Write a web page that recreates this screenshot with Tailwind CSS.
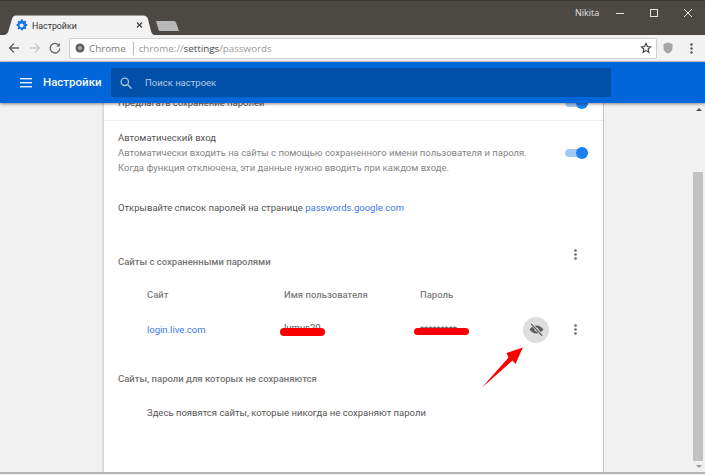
<!DOCTYPE html>
<html lang="ru">
<head>
  <meta charset="UTF-8" />
  <title>Настройки</title>
  <script src="https://cdn.jsdelivr.net/npm/@tailwindcss/browser@4"></script>
</head>
<body class="relative w-[705px] h-[475px] overflow-hidden bg-[#f1f1f1] font-['Roboto',sans-serif] text-[9.5px] leading-[15px] text-[#555]">

  <!-- Title bar -->
  <div class="relative flex h-[35px] bg-[#4c4844] border-t border-[#3a3734]">
    <svg class="absolute left-0 top-[-1px]" width="185" height="36" viewBox="0 0 185 36">
      <path d="M2 35.500 C7 35 8 33 9 29 L12 19 C13 16 14 15.500 16 15.500 L143 15.500 C146 15.500 147 17 148 19 L151 31 C152 34 153 35 156 35.500 Z" fill="#f2f2f2"/>
      <path d="M156 21 H174 Q175.500 21 176 22.500 L179 31 H160 Q159 31 158.500 29.500 Z" fill="#b9b9b9"/>
      <path d="M22 16.800l1.100.3.300 1.200 1.100.4 1-.6 1.300 1.300-.6 1 .4 1.100 1.200.3v1.800l-1.200.3-.4 1.100.6 1-1.300 1.300-1-.6-1.100.4-.3 1.200h-1.800l-.3-1.200-1.100-.4-1 .6-1.300-1.300.6-1-.4-1.100-1.200-.3v-1.800l1.200-.3.4-1.100-.6-1 1.300-1.300 1 .6 1.100-.4.300-1.200z" transform="translate(0.600 3.200) scale(0.96)" fill="#1a73e8"/>
      <circle cx="21.600" cy="25.500" r="2" fill="#f2f2f2"/>
      <path d="M137 22.500l5 5m0-5l-5 5" stroke="#444" stroke-width="1.300" fill="none"/>
    </svg>
    <span class="absolute left-[32px] top-[18px] text-[8.8px] text-[#333]">Настройки</span>
    <span class="ml-[575px] mt-[4px] text-[9px] font-['Open_Sans',sans-serif] text-[#e4e2e0]">Nikita</span>
    <svg class="absolute left-[612px] top-[3px]" width="86" height="18" viewBox="0 0 86 18" fill="none" stroke="#e6e6e6" stroke-width="1">
      <path d="M4 9.500h8"/>
      <rect x="38.500" y="5.500" width="7" height="7"/>
      <path d="M72 5l8 8m0-8l-8 8"/>
    </svg>
  </div>

  <!-- Toolbar -->
  <div class="flex h-[27px] items-center bg-[#f2f2f2] border-b border-[#c9c9c9]">
    <svg class="ml-[8px] shrink-0" width="12" height="12" viewBox="0 0 12 12" fill="none" stroke="#5f6368" stroke-width="1.300"><path d="M11 6H1.500M6 1.500L1.500 6 6 10.500"/></svg>
    <svg class="ml-[9px] shrink-0" width="12" height="12" viewBox="0 0 12 12" fill="none" stroke="#c8c8c8" stroke-width="1.300"><path d="M1 6h9.500M6 1.500L10.500 6 6 10.500"/></svg>
    <svg class="ml-[8px] shrink-0" width="12" height="12" viewBox="0 0 12 12" fill="none" stroke="#5f6368" stroke-width="1.300"><path d="M10 3.500A4.800 4.800 0 1 0 10.800 6.500"/><path d="M10.800 1v3.600H7.200z" fill="#5f6368" stroke="none"/></svg>
    <div class="ml-[8px] flex h-[21px] w-[588px] shrink-0 items-center rounded-[2px] border border-[#cfcfcf] bg-white font-['Open_Sans',sans-serif] text-[9.800px] text-[#777]">
      <svg class="ml-[5px] shrink-0" width="10" height="10" viewBox="0 0 10 10"><circle cx="5" cy="5" r="4.500" fill="#5f5f5f"/><circle cx="5" cy="5" r="1.800" fill="#bbb"/></svg>
      <span class="ml-[4px]">Chrome</span>
      <span class="ml-[7px] h-[13px] w-px bg-[#bbb]"></span>
      <span class="ml-[5px] text-[#999]">chrome://<span class="text-[#444]">settings</span>/passwords</span>
      <svg class="ml-auto mr-[4px]" width="12" height="12" viewBox="0 0 24 24" fill="none" stroke="#444" stroke-width="2.400"><path d="M12 3l2.700 6 6.300.7-4.700 4.300 1.300 6.500L12 17.200 6.400 20.500 7.700 14 3 9.700 9.300 9z"/></svg>
    </div>
    <svg class="ml-[6px] shrink-0" width="10" height="12" viewBox="0 0 10 12"><path d="M5 .5l4.500 1.500v4c0 3-2 4.800-4.500 5.500C2.500 10.800.5 9 .5 6V2z" fill="#a5a5a5"/></svg>
    <svg class="ml-[17px] shrink-0" width="3" height="11" viewBox="0 0 3 11" fill="#555"><circle cx="1.500" cy="1.500" r="1.200"/><circle cx="1.500" cy="5.500" r="1.200"/><circle cx="1.500" cy="9.500" r="1.200"/></svg>
  </div>

  <!-- Settings header -->
  <header class="relative z-10 flex h-[41px] items-start bg-[#0066d9] shadow-[0_1px_3px_rgba(0,0,0,0.45)]">
    <svg class="ml-[20px] mt-[16px] shrink-0" width="12" height="10" viewBox="0 0 12 10" fill="#e8f0fb"><rect width="12" height="1.400"/><rect y="4" width="12" height="1.400"/><rect y="8" width="12" height="1.400"/></svg>
    <span class="ml-[11px] mt-[13px] w-[68px] shrink-0 text-[11.500px] font-medium text-[#f2f6fc]">Настройки</span>
    <div class="mt-[6px] flex h-[29px] w-[500px] shrink-0 items-center rounded-[1px] bg-[#0050a9]">
      <svg class="ml-[9px] shrink-0" width="12" height="12" viewBox="0 0 12 12" fill="none" stroke="#a9c4e4" stroke-width="1.300"><circle cx="4.800" cy="4.800" r="3.700"/><path d="M7.500 7.500L11.500 11.500"/></svg>
      <span class="ml-[13px] text-[#b5cce8]">Поиск настроек</span>
    </div>
  </header>

  <!-- Page content -->
  <main class="relative flex h-[371px] overflow-hidden">
    <section class="ml-[102px] h-[369px] w-[502px] shrink-0 border-x border-l-2 border-x-[#c4c4c4] border-l-[#dcdcdc] bg-white">
      <div class="-mt-[18px] flex h-[36px] items-center justify-between border-b border-[#ebebeb] pl-[14px] pr-[15px]">
        <span>Предлагать сохранение паролей</span>
        <span class="relative block h-[8px] w-[23px] rounded-full bg-[#a3c8f7]"><span class="absolute right-0 top-[-2px] h-[12px] w-[12px] rounded-full bg-[#1a80f0]"></span></span>
      </div>
      <div class="mt-[9px] flex items-center justify-between pl-[14px] pr-[15px]">
        <div>
          <p>Автоматический вход</p>
          <p class="text-[#858585]">Автоматически входить на сайты с помощью сохраненного имени пользователя и пароля.</p>
          <p class="text-[#858585]">Когда функция отключена, эти данные нужно вводить при каждом входе.</p>
        </div>
        <span class="relative block h-[8px] w-[23px] shrink-0 rounded-full bg-[#a3c8f7]"><span class="absolute right-0 top-[-2px] h-[12px] w-[12px] rounded-full bg-[#1a80f0]"></span></span>
      </div>
      <p class="mt-[25px] pl-[14px]">Открывайте список паролей на странице <span class="text-[#3b78e7]">passwords.google.com</span></p>
      <div class="mt-[34px] flex items-center justify-between pl-[14px] pr-[26px]">
        <span class="font-medium text-[#757575]">Сайты с сохраненными паролями</span>
        <svg class="mb-[14px]" width="3" height="11" viewBox="0 0 3 11" fill="#666"><circle cx="1.500" cy="1.500" r="1.300"/><circle cx="1.500" cy="5.500" r="1.300"/><circle cx="1.500" cy="9.500" r="1.300"/></svg>
      </div>
      <div class="mt-[13px] grid grid-cols-[137px_136px_1fr] pl-[43px] font-medium text-[#808080]">
        <span>Сайт</span>
        <span>Имя пользователя</span>
        <span>Пароль</span>
      </div>
      <div class="mt-[14px] flex h-[27px] items-center pl-[43px] pr-[26px]">
        <span class="w-[137px] text-[#3b78e7]">login.live.com</span>
        <span class="mb-[4px] w-[136px]">lumus20</span>
        <span>*********</span>
        <span class="ml-auto mr-[25px] flex h-[26px] w-[26px] items-center justify-center rounded-full bg-[#dedede]">
          <svg width="15" height="15" viewBox="0 0 24 24" fill="#5f5f5f"><path d="M12 5.500c-5 0-9 3-11 6.500 2 3.500 6 6.500 11 6.500s9-3 11-6.500c-2-3.500-6-6.500-11-6.500z"/><circle cx="12" cy="12" r="3" fill="#dedede"/><path d="M3.500 2.500l17.500 19" stroke="#dedede" stroke-width="4.200"/><path d="M3.500 3l17.500 19" stroke="#5f5f5f" stroke-width="1.800"/></svg>
        </span>
        <svg width="3" height="11" viewBox="0 0 3 11" fill="#666"><circle cx="1.500" cy="1.500" r="1.300"/><circle cx="1.500" cy="5.500" r="1.300"/><circle cx="1.500" cy="9.500" r="1.300"/></svg>
      </div>
      <p class="mt-[28px] pl-[14px] font-medium text-[#757575]">Сайты, пароли для которых не сохраняются</p>
      <p class="mt-[19px] pl-[43px]">Здесь появятся сайты, которые никогда не сохраняют пароли</p>
    </section>

    <!-- Scrollbar -->
    <div class="ml-auto flex h-[369px] w-[12px] flex-col items-start">
      <div class="ml-[3px] mt-[5px] h-0 w-0 border-x-[3px] border-b-[3px] border-x-transparent border-b-[#555]"></div>
      <div class="mt-[61px] h-[289px] w-[10px] bg-[#c1c1c1]"></div>
      <div class="ml-[3px] mt-[4px] h-0 w-0 border-x-[3px] border-t-[3px] border-x-transparent border-t-[#999]"></div>
    </div>
    <div class="absolute bottom-0 left-0 h-[2px] w-full bg-[#b5b5b5]"></div>
  </main>

  <!-- Red annotations drawn on top of the screenshot -->
  <svg class="absolute left-0 top-0 z-20" width="705" height="475" viewBox="0 0 705 475" fill="#f80000">
    <rect x="280" y="328" width="45" height="8" rx="4"/>
    <rect x="414" y="328" width="55" height="7" rx="3.500"/>
    <path d="M481.500 388L508.500 357.500L506.500 353L522.800 347.500L515.500 364L512.500 360.500Z"/>
  </svg>
</body>
</html>
